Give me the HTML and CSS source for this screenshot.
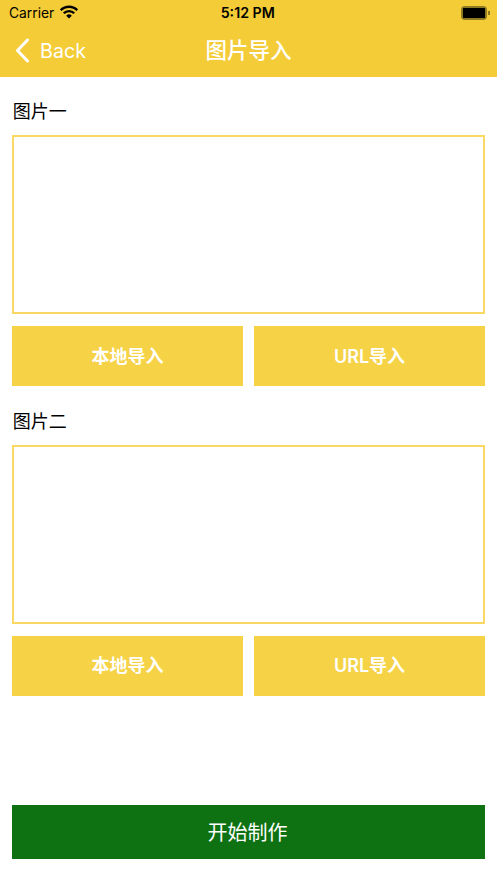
FILE: index.html
```html
<!DOCTYPE html>
<html lang="zh">

<head>
    <meta charset="UTF-8">
    <meta name="viewport" content="width=device-width, initial-scale=1.0">
    <title>图片导入</title>
    <link rel="stylesheet" href="styles.css">
</head>

<body>
    <div class="header">
        <div class="status-bar">
            <div class="status-left">
                <span class="carrier">Carrier</span>
                <svg class="wifi" width="18" height="14" viewBox="0 0 18 14">
                    <path d="M.66 5.16a11.800 11.800 0 0 1 16.680 0" fill="none" stroke="#000" stroke-width="2.400" />
                    <path d="M3.770 8.270a7.400 7.400 0 0 1 10.460 0" fill="none" stroke="#000" stroke-width="2.400" />
                    <path d="M9 13.500L6.200 10.700a4 4 0 0 1 5.600 0z" fill="#000" />
                </svg>
            </div>
            <span class="clock">5:12 PM</span>
            <div class="battery">
                <div class="battery-body">
                    <div class="battery-fill"></div>
                </div>
                <div class="battery-cap"></div>
            </div>
        </div>
        <div class="nav-bar">
            <div class="back">
                <svg width="15" height="25" viewBox="0 0 15 25">
                    <path d="M12.500 2L2.500 12.500l10 10.500" fill="none" stroke="#fff" stroke-width="3" stroke-linecap="round" stroke-linejoin="round" />
                </svg>
                <span>Back</span>
            </div>
            <div class="nav-title">图片导入</div>
        </div>
    </div>

    <div class="content">
        <div class="section">
            <div class="label">图片一</div>
            <div class="picture-box"></div>
            <div class="button-row">
                <button class="import-btn">本地导入</button>
                <button class="import-btn">URL导入</button>
            </div>
        </div>
        <div class="section">
            <div class="label">图片二</div>
            <div class="picture-box"></div>
            <div class="button-row">
                <button class="import-btn">本地导入</button>
                <button class="import-btn">URL导入</button>
            </div>
        </div>
        <button class="start-btn">开始制作</button>
    </div>
</body>

</html>
```

FILE: styles.css
```css
* {
    margin: 0;
    padding: 0;
    box-sizing: border-box;
    font-family: Inter, "Noto Sans CJK SC", sans-serif;
}

body {
    width: 497px;
    height: 883px;
    background-color: #fff;
    overflow: hidden;
}

.header {
    height: 77px;
    background-color: #f4cc37;
}

.status-bar {
    height: 25px;
    padding: 0 6.500px 0 9px;
    display: flex;
    align-items: center;
    justify-content: space-between;
    color: #000;
    font-size: 13.800px;
}

.status-left {
    width: 156px;
    display: flex;
    align-items: center;
    gap: 6px;
}

.wifi {
    margin-top: -2px;
}

.clock {
    font-weight: 600;
    font-size: 14.200px;
}

.battery {
    width: 160px;
    display: flex;
    justify-content: flex-end;
    align-items: center;
}

.battery-body {
    width: 26px;
    height: 14px;
    border: 2px solid #8f7a24;
    border-radius: 4px;
}

.battery-fill {
    height: 100%;
    background-color: #000;
}

.battery-cap {
    width: 2px;
    height: 4px;
    margin-left: 1px;
    background-color: #8f7a24;
}

.nav-bar {
    position: relative;
    height: 52px;
    padding-bottom: 5px;
    display: flex;
    align-items: center;
    justify-content: center;
}

.back {
    position: absolute;
    left: 15px;
    top: 13px;
    display: flex;
    align-items: center;
    gap: 10px;
    color: #fff;
    font-size: 19.700px;
}

.nav-title {
    color: #fff;
    font-size: 21.500px;
    font-weight: 500;
}

.content {
    padding: 0 12.300px;
}

.section {
    padding-top: 21px;
}

.section + .section {
    padding-top: 21.300px;
}

.label {
    height: 27px;
    padding-left: 0.500px;
    font-size: 18px;
    line-height: 27px;
    color: #000;
    margin-bottom: 10px;
}

.picture-box {
    height: 179.300px;
    border: 2px solid #f9d964;
    background-color: #fff;
}

.button-row {
    display: flex;
    gap: 11.600px;
    margin-top: 12px;
}

.import-btn {
    flex: 1;
    height: 60px;
    padding-bottom: 3px;
    border: none;
    background-color: #f6d246;
    color: #fff;
    font-size: 18px;
    font-weight: 600;
}

.start-btn {
    display: block;
    width: 100%;
    height: 54px;
    margin-top: 108.800px;
    padding-right: 2px;
    border: none;
    background-color: #0e7213;
    color: #fff;
    font-size: 20px;
}
```
